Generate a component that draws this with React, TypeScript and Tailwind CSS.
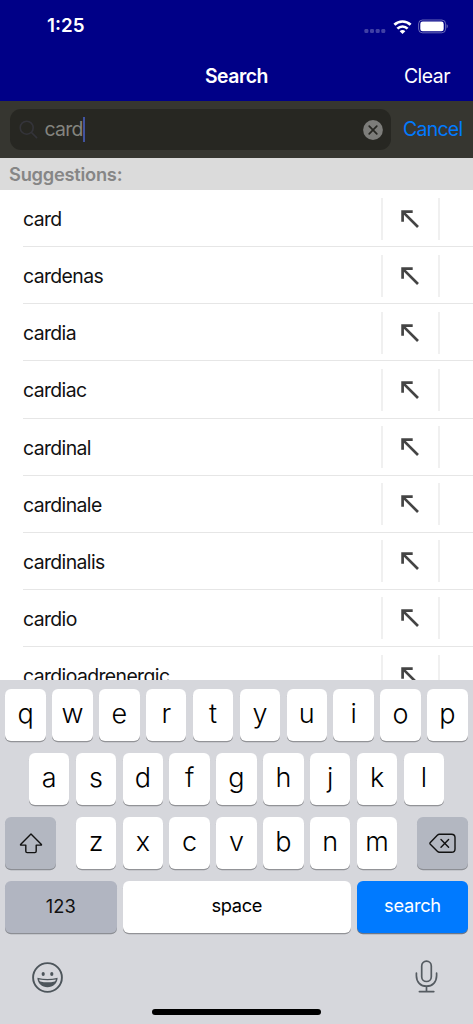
import { useState } from 'react';

const suggestions = [
  'card',
  'cardenas',
  'cardia',
  'cardiac',
  'cardinal',
  'cardinale',
  'cardinalis',
  'cardio',
  'cardioadrenergic',
];

const topRow = ['q', 'w', 'e', 'r', 't', 'y', 'u', 'i', 'o', 'p'];
const middleRow = ['a', 's', 'd', 'f', 'g', 'h', 'j', 'k', 'l'];
const bottomRow = ['z', 'x', 'c', 'v', 'b', 'n', 'm'];

interface LetterKeyProps {
  letter: string;
  onPress: (letter: string) => void;
}

function LetterKey({ letter, onPress }: LetterKeyProps) {
  return (
    <button
      onClick={() => onPress(letter)}
      className="w-[40.5px] h-[51.5px] shrink-0 rounded-[6px] bg-white shadow-[0_1.2px_0_#929397] flex items-center justify-center pb-[2px] text-[27px] leading-none font-[350] text-black"
    >
      {letter}
    </button>
  );
}

function StatusBar() {
  return (
    <div className="h-[51px] flex items-center justify-between pl-[47px] pr-[25px] pt-[2px]">
      <span className="text-[18.8px] font-semibold">1:25</span>
      <div className="flex items-center">
        <svg width="22" height="6" viewBox="0 0 22 6" className="mt-[9px] mr-[7px]" fill="#fff" fillOpacity="0.25">
          <rect x="0.4" y="1" width="4" height="4" rx="1.3" />
          <rect x="6" y="1" width="4" height="4" rx="1.3" />
          <rect x="11.7" y="1" width="4" height="4" rx="1.3" />
          <rect x="17.3" y="1" width="4" height="4" rx="1.3" />
        </svg>
        <svg width="19" height="14" viewBox="0 0 18 14" fill="none" stroke="#fff" strokeWidth="2.7" className="mr-[6.5px]">
          <path d="M0.9 4.8A11.6 11.6 0 0 1 17.1 4.8" />
          <path d="M3.9 8.6A7.2 7.2 0 0 1 14.1 8.6" />
          <path d="M9 14L6.2 11.2A3.9 3.9 0 0 1 11.8 11.2Z" fill="#fff" stroke="none" />
        </svg>
        <svg width="30" height="15" viewBox="0 0 30 15" fill="none">
          <rect x="0.6" y="1" width="27" height="12.8" rx="3.8" stroke="#fff" strokeOpacity="0.4" />
          <rect x="2.3" y="2.6" width="23.4" height="9.6" rx="2.3" fill="#fff" />
          <path d="M28.7 5.3C30 6 30 8.8 28.7 9.5Z" fill="#fff" fillOpacity="0.5" />
        </svg>
      </div>
    </div>
  );
}

export default function App() {
  const [query, setQuery] = useState('card');

  const addLetter = (letter: string) => setQuery(query + letter);

  return (
    <div className="w-[473px] h-[1024px] overflow-hidden flex flex-col bg-white font-['Inter','Liberation_Sans',sans-serif]">
      {/* Header */}
      <header className="h-[101px] shrink-0 bg-[#000087] text-white">
        <StatusBar />
        <div className="h-[50px] grid grid-cols-3 items-center pt-px pr-[23px] pl-[23px]">
          <span />
          <h1 className="text-center text-[19.4px] font-semibold tracking-[-0.45px]">Search</h1>
          <button className="text-right text-[19.4px] tracking-[-0.5px]">Clear</button>
        </div>
      </header>

      {/* Search bar */}
      <div className="h-[57px] shrink-0 bg-[#363630] flex items-center pl-[9.5px]">
        <div className="w-[381px] h-[41px] shrink-0 rounded-[11px] bg-[#272722] flex items-center pl-[9px] pr-[8px]">
          <svg width="19" height="19" viewBox="0 0 19 19" fill="none" stroke="#34343a" strokeWidth="1.6" strokeLinecap="round">
            <circle cx="7.7" cy="7.7" r="6.5" />
            <path d="M12.5 12.5L17.6 17.6" />
          </svg>
          <span className="ml-[7px] pt-px text-[19.4px] tracking-[-0.75px] text-[#84847f]">{query}</span>
          <span className="w-[2.3px] h-[25px] bg-[#41539f]" />
          <button className="ml-auto" onClick={() => setQuery('')}>
            <svg width="20" height="20" viewBox="0 0 20 20" fill="none">
              <circle cx="10" cy="10" r="9.9" fill="#7d7d7a" />
              <path d="M6.2 6.2L13.8 13.8M13.8 6.2L6.2 13.8" stroke="#272722" strokeWidth="1.7" strokeLinecap="round" />
            </svg>
          </button>
        </div>
        <button className="ml-[12.5px] text-[19.4px] tracking-[-0.7px] text-[#007aff]">Cancel</button>
      </div>

      {/* Suggestions */}
      <div className="h-[32px] shrink-0 bg-[#dbdbdb] flex items-center pl-[9px] pt-px text-[18.3px] font-semibold text-[#868686] tracking-[-0.25px]">
        Suggestions:
      </div>
      <ul className="h-[490px] shrink-0 overflow-hidden">
        {suggestions.map((word) => (
          <li key={word} className="h-[57.14px] ml-[23px] flex items-center border-b border-[#e6e6e6]">
            <span className="flex-1 pt-[3px] text-[19.4px] tracking-[-0.6px] text-[#111]">{word}</span>
            <button
              onClick={() => setQuery(word)}
              className="w-[59px] h-[42px] mr-[33px] mt-px flex items-center justify-center border-x-2 border-[#f0f0f0]"
            >
              <svg width="18" height="18" viewBox="0 0 18 18" fill="none" stroke="#444" strokeWidth="2.7" className="mr-[1px]">
                <path d="M11.7 1.6H1.6V11.7M1.6 1.6L17 17" />
              </svg>
            </button>
          </li>
        ))}
      </ul>

      {/* Keyboard */}
      <div className="flex-1 bg-[#d6d7dc] flex flex-col pt-[9px]">
        <div className="flex flex-col gap-[12.5px]">
          <div className="flex justify-center gap-[6.35px]">
            {topRow.map((letter) => (
              <LetterKey key={letter} letter={letter} onPress={addLetter} />
            ))}
          </div>
          <div className="flex justify-center gap-[6.35px]">
            {middleRow.map((letter) => (
              <LetterKey key={letter} letter={letter} onPress={addLetter} />
            ))}
          </div>
          <div className="flex justify-between px-[5px]">
            <button className="w-[51px] h-[51.5px] rounded-[6px] bg-[#b3b7c1] shadow-[0_1.2px_0_#8c8e94] flex items-center justify-center">
              <svg width="24" height="21" viewBox="0 0 24 21" fill="none" stroke="#111" strokeWidth="1.4" strokeLinejoin="round" className="mt-px">
                <path d="M12 1L22.2 11.2Q23 12.1 21.8 12.1H17.2V18.2Q17.2 19.6 15.8 19.6H8.2Q6.8 19.6 6.8 18.2V12.1H2.2Q1 12.1 1.8 11.2Z" />
              </svg>
            </button>
            <div className="flex gap-[6.35px]">
              {bottomRow.map((letter) => (
                <LetterKey key={letter} letter={letter} onPress={addLetter} />
              ))}
            </div>
            <button
              onClick={() => setQuery(query.slice(0, -1))}
              className="w-[51px] h-[51.5px] rounded-[6px] bg-[#b3b7c1] shadow-[0_1.2px_0_#8c8e94] flex items-center justify-center"
            >
              <svg width="27" height="21" viewBox="0 0 27 21" fill="none" stroke="#111" strokeWidth="1.4" strokeLinecap="round" strokeLinejoin="round" className="mt-px">
                <path d="M10.5 1.2H22.5Q26 1.2 26 4.5V16Q26 19.3 22.5 19.3H10.5Q9.3 19.3 8.3 18.3L1.3 11.2Q0.5 10.3 1.3 9.4L8.3 2.2Q9.3 1.2 10.5 1.2Z" />
                <path d="M12 6.4L19.6 14.2M19.6 6.4L12 14.2" />
              </svg>
            </button>
          </div>
          <div className="flex gap-[6.5px] px-[5px] text-[18.3px]">
            <button className="w-[111.5px] h-[51.5px] rounded-[6px] bg-[#b1b5c1] shadow-[0_1.2px_0_#8c8e94] text-[#111]">123</button>
            <button className="w-[227.5px] h-[51.5px] pb-[3px] rounded-[6px] bg-white shadow-[0_1.2px_0_#929397] tracking-[-0.4px] text-black">space</button>
            <button className="flex-1 h-[51.5px] pb-[3px] rounded-[6px] bg-[#007aff] shadow-[0_1.2px_0_#6c7789] tracking-[-0.3px] text-white">search</button>
          </div>
        </div>

        <div className="flex items-center justify-between mt-[27px] pl-[32px] pr-[35px]">
          <svg width="31" height="31" viewBox="0 0 31 31" fill="none" className="mt-[2px]">
            <circle cx="15.5" cy="15.5" r="14.4" stroke="#4d555b" strokeWidth="1.9" />
            <ellipse cx="11.2" cy="12" rx="1.6" ry="1.9" fill="#4d555b" />
            <ellipse cx="19.8" cy="12" rx="1.6" ry="1.9" fill="#4d555b" />
            <path d="M5.4 15.8Q15.5 18.2 25.6 15.8C25.6 21.4 21 25.3 15.5 25.3S5.4 21.4 5.4 15.8Z" fill="#4d555b" />
            <path d="M7 17.4Q15.5 19 24 17.4C23.7 18.4 23.3 19 22.7 19.5Q15.5 21.2 8.3 19.5C7.6 19 7.2 18.3 7 17.4Z" fill="#d6d7dc" />
          </svg>
          <svg width="23" height="34" viewBox="0 0 23 34" fill="none" stroke="#555b61" strokeWidth="1.7" strokeLinecap="round">
            <rect x="6.7" y="1.1" width="9.6" height="20.4" rx="4.8" />
            <path d="M1.4 13.2V15.8C1.4 21.9 5.5 26.2 11.5 26.2S21.6 21.9 21.6 15.8V13.2M11.5 26.2V31.6M4.4 31.6H18.8" />
          </svg>
        </div>
        <div className="w-[169px] h-[6px] mt-auto mb-[9.5px] mx-auto rounded-full bg-black" />
      </div>
    </div>
  );
}
